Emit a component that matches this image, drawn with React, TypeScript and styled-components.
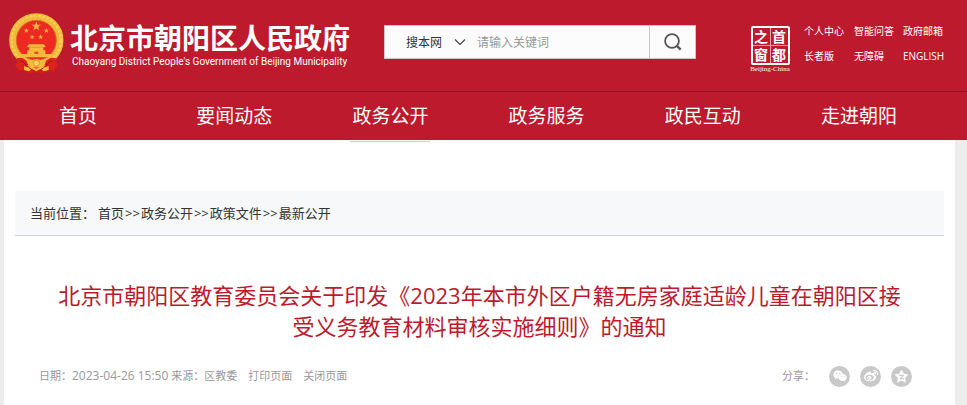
import React from 'react';
import styled, { createGlobalStyle } from 'styled-components';
import { FaWeixin, FaWeibo } from 'react-icons/fa';

const red = '#bd1a2d';

const GlobalStyle = createGlobalStyle`
  *, *::before, *::after { box-sizing: border-box; }
  body {
    margin: 0;
    background: #ededed;
    font-family: "Open Sans", "Noto Sans CJK SC", sans-serif;
    color: #333;
  }
  a { color: inherit; text-decoration: none; }
  button, input, select { font: inherit; color: inherit; margin: 0; }
`;

const Page = styled.div`
  display: flex;
  flex-direction: column;
  min-height: 100vh;
`;

const Header = styled.header`
  background: ${red};
  color: #fff;
`;

const TopBar = styled.div`
  display: flex;
  align-items: flex-start;
  height: 92px;
  padding: 0 20px 0 8px;
  border-bottom: 1px solid #960f20;
`;

const Brand = styled.a`
  display: flex;
  gap: 5px;
  padding-top: 13px;
  white-space: nowrap;
`;

const BrandText = styled.span`
  display: flex;
  flex-direction: column;
  width: 284px;
  padding-top: 8px;
`;

const BrandName = styled.span`
  font-size: 28px;
  line-height: 34px;
  font-weight: 700;
`;

const BrandEnglish = styled.span`
  padding-left: 2px;
  font-family: Roboto, sans-serif;
  font-size: 10px;
  line-height: 14px;
`;

const Search = styled.form`
  display: flex;
  width: 312px;
  height: 34px;
  margin: 25px 0 0 30px;
  border: 1px solid #c8c8c8;
  background: #fcfcfc;
  color: #333;
  font-size: 12px;
`;

const ScopeField = styled.label`
  display: flex;
  align-items: center;
  gap: 9px;
  padding-left: 21px;
`;

const Scope = styled.select`
  appearance: none;
  width: 39px;
  padding: 0;
  border: 0;
  background: transparent;
  outline: none;
`;

const Keyword = styled.input`
  flex: 1;
  min-width: 0;
  padding: 0 11px;
  border: 0;
  background: transparent;
  outline: none;
  &::placeholder { color: #999; opacity: 1; }
`;

const SearchButton = styled.button`
  display: flex;
  align-items: center;
  justify-content: center;
  width: 46px;
  padding: 0;
  border: 0;
  border-left: 1px solid #c8c8c8;
  background: transparent;
  cursor: pointer;
`;

const Seal = styled.a`
  display: flex;
  flex-direction: column;
  align-items: center;
  width: 44px;
  margin: 26px 12px 0 auto;
`;

const SealFrame = styled.span`
  display: grid;
  grid-template-columns: 1fr 1fr;
  grid-template-rows: 1fr 1fr;
  gap: 1px;
  width: 39px;
  height: 39px;
  border: 2px solid #fff;
  border-radius: 2px;
  background: #e3a0a8;
`;

const SealGlyph = styled.span`
  display: flex;
  align-items: center;
  justify-content: center;
  background: ${red};
  font-size: 14px;
  line-height: 17px;
  font-weight: 700;
`;

const SealCaption = styled.span`
  font-family: "Liberation Serif", serif;
  font-size: 7px;
  line-height: 8px;
  white-space: nowrap;
`;

const QuickLinks = styled.nav`
  display: grid;
  grid-template-columns: 50px 49px 44px;
  row-gap: 9px;
  padding-top: 23px;
  font-size: 10px;
  line-height: 16px;
  white-space: nowrap;
`;

const MainNav = styled.nav`
  position: relative;
  display: flex;
  height: 48px;
  padding-right: 30px;
`;

const NavItem = styled.a`
  flex: 1;
  display: flex;
  align-items: flex-start;
  justify-content: center;
  font-size: 19px;
  line-height: 48px;
  white-space: nowrap;
`;

const NavLabel = styled.span<{ $active?: boolean }>`
  height: 50px;
  padding: 0 2px;
  border-bottom: ${(p) => (p.$active ? '1px solid #ecd08a' : 'none')};
`;

const Content = styled.main`
  flex: 1;
  margin: 0 12px 0 4px;
  padding: 51px 11px 16px;
  background: #fff;
`;

const Breadcrumb = styled.nav`
  height: 45px;
  padding-left: 15px;
  border-bottom: 1px solid #c8d4e2;
  background: #f7f8fa;
  font-size: 13px;
  line-height: 44px;
  white-space: nowrap;
`;

const CrumbLabel = styled.span`
  margin-right: 3px;
`;

const CrumbArrow = styled.span`
  margin: 0 1px;
`;

const Title = styled.h1`
  margin: 44px 0 0;
  padding: 0 32px;
  color: ${red};
  font-size: 22px;
  line-height: 31px;
  font-weight: 400;
  text-align: center;
`;

const TitleLine = styled.span`
  display: block;
  white-space: nowrap;
`;

const Meta = styled.div`
  display: flex;
  align-items: center;
  height: 22px;
  margin-top: 23px;
  padding: 0 32px 0 24px;
  color: #999;
  font-size: 11px;
  line-height: 20px;
  white-space: nowrap;
`;

const Timestamp = styled.time`
  font-size: 12px;
`;

const PageAction = styled.button`
  margin-left: 11px;
  padding: 0;
  border: 0;
  background: transparent;
  cursor: pointer;
`;

const Share = styled.div`
  display: flex;
  align-items: center;
  gap: 10px;
  margin-left: auto;
`;

const ShareLabel = styled.span`
  margin-right: 4px;
`;

const ShareLink = styled.a`
  display: flex;
  align-items: center;
  justify-content: center;
  width: 21px;
  height: 21px;
  border-radius: 50%;
  background: #c9c9c9;
  color: #fff;
`;

const star = (cx: number, cy: number, r: number, inner = 0.4) =>
  Array.from({ length: 10 }, (_, i) => {
    const a = (Math.PI / 5) * i - Math.PI / 2;
    const d = i % 2 ? r * inner : r;
    return `${(cx + d * Math.cos(a)).toFixed(1)},${(cy + d * Math.sin(a)).toFixed(1)}`;
  }).join(' ');

const Emblem = () => (
  <svg width="57" height="60" viewBox="24 15 171 180" aria-hidden="true">
    <path d="M50 151l16 3 43 8 43-8 17-4 2 15 6 10-10 4-5 12-16-4-12 8H84l-12-7-14 3-3-11-9-4 7-12z" fill="#d5191c" />
    <circle cx="109" cy="97" r="71" fill="#e82a20" stroke="#f0b93c" strokeWidth="21" />
    <circle cx="109" cy="97" r="74" fill="none" stroke="#f8ce55" strokeWidth="7" strokeDasharray="9 4" />
    <circle cx="109" cy="97" r="60" fill="#ec2a22" stroke="#d98a21" strokeWidth="2" />
    <g fill="#f8b83c">
      <polygon points={star(109, 55, 15)} />
      <polygon points={star(79, 68, 8)} />
      <polygon points={star(139, 68, 8)} />
      <polygon points={star(96, 87, 8)} />
      <polygon points={star(122, 87, 8)} />
      <path d="M86 109h46l5 8H81zM88 117h42v10H88zM82 127h54v11H82zM61 138h96l-7 10H68z" />
    </g>
    <path d="M84 118h50" stroke="#e8832a" strokeWidth="2" />
    <path d="M103 131h12v7h-12z" fill="#d9541d" />
    <path d="M50 151q14-5 27 5l11 13-17 13-12 9-7-12-7-8 8-8zM168 151q-14-5-27 5l-11 13 17 13 12 9 7-12 7-8-8-8z" fill="#dd211d" />
    <path d="M80 160l12 5 5-9 12-3 12 3 5 9 12-5-7 16H87z" fill="#f2bb3c" />
    <circle cx="109" cy="166" r="9" fill="#f8cf58" stroke="#db7b22" strokeWidth="2" />
    <path d="M72 174q16 8 24 1l13 7 13-7q8 7 24-1v12l-15 4-10-7-12 7-12-7-10 7-15-4z" fill="#f4bd3d" />
    <path d="M61 158q10 0 18 15M157 158q-10 0-18 15M88 180l8 5M130 180l-8 5" fill="none" stroke="#a91018" strokeWidth="3" />
  </svg>
);

const ChevronDown = () => (
  <svg width="12" height="8" viewBox="0 0 12 8" aria-hidden="true">
    <path d="M1 1.5l5 5 5-5" fill="none" stroke="#444" strokeWidth="1.2" />
  </svg>
);

const Magnifier = () => (
  <svg width="18" height="18" viewBox="0 0 18 18" aria-hidden="true">
    <circle cx="8" cy="8" r="6.9" fill="none" stroke="#555" strokeWidth="1.8" />
    <path d="M12.4 12.4l4.3 4.2" stroke="#555" strokeWidth="2.2" />
  </svg>
);

const Qzone = () => (
  <svg width="15" height="15" viewBox="0 0 30 30" aria-hidden="true">
    <polygon points={star(15, 15.5, 13.5, 0.5)} fill="#fff" stroke="#fff" strokeWidth="1.5" strokeLinejoin="round" />
    <path d="M10 12.5h9.5l-8 7H20" fill="none" stroke="#c4c4c4" strokeWidth="2" />
  </svg>
);

const quickLinks = ['个人中心', '智能问答', '政府邮箱', '长者版', '无障碍', 'ENGLISH'];
const sections = ['首页', '要闻动态', '政务公开', '政务服务', '政民互动', '走进朝阳'];
const crumbs = ['首页', '政务公开', '政策文件', '最新公开'];

export default function App() {
  return (
    <Page lang="zh-CN">
      <GlobalStyle />
      <Header>
        <TopBar>
          <Brand href="#">
            <Emblem />
            <BrandText>
              <BrandName>北京市朝阳区人民政府</BrandName>
              <BrandEnglish>Chaoyang District People's Government of Beijing Municipality</BrandEnglish>
            </BrandText>
          </Brand>
          <Search onSubmit={(e) => e.preventDefault()}>
            <ScopeField>
              <Scope aria-label="搜索范围">
                <option>搜本网</option>
              </Scope>
              <ChevronDown />
            </ScopeField>
            <Keyword type="text" aria-label="关键词" placeholder="请输入关键词" />
            <SearchButton type="submit" aria-label="搜索">
              <Magnifier />
            </SearchButton>
          </Search>
          <Seal href="#">
            <SealFrame>
              {['之', '首', '窗', '都'].map((c) => (
                <SealGlyph key={c}>{c}</SealGlyph>
              ))}
            </SealFrame>
            <SealCaption>Beijing-China</SealCaption>
          </Seal>
          <QuickLinks>
            {quickLinks.map((t) => (
              <a key={t} href="#">{t}</a>
            ))}
          </QuickLinks>
        </TopBar>
        <MainNav>
          {sections.map((t) => (
            <NavItem key={t} href="#">
              <NavLabel $active={t === '政务公开'}>{t}</NavLabel>
            </NavItem>
          ))}
        </MainNav>
      </Header>
      <Content>
        <Breadcrumb>
          <CrumbLabel>当前位置：</CrumbLabel>
          {crumbs.map((t, i) => (
            <React.Fragment key={t}>
              {i > 0 && <CrumbArrow>&gt;&gt;</CrumbArrow>}
              <a href="#">{t}</a>
            </React.Fragment>
          ))}
        </Breadcrumb>
        <Title>
          <TitleLine>北京市朝阳区教育委员会关于印发《2023年本市外区户籍无房家庭适龄儿童在朝阳区接</TitleLine>
          <TitleLine>受义务教育材料审核实施细则》的通知</TitleLine>
        </Title>
        <Meta>
          <span>
            日期：<Timestamp>2023-04-26 15:50</Timestamp> 来源：区教委
          </span>
          <PageAction type="button">打印页面</PageAction>
          <PageAction type="button">关闭页面</PageAction>
          <Share>
            <ShareLabel>分享：</ShareLabel>
            <ShareLink href="#" aria-label="微信"><FaWeixin size={14} /></ShareLink>
            <ShareLink href="#" aria-label="微博"><FaWeibo size={14} /></ShareLink>
            <ShareLink href="#" aria-label="QQ空间"><Qzone /></ShareLink>
          </Share>
        </Meta>
      </Content>
    </Page>
  );
}
